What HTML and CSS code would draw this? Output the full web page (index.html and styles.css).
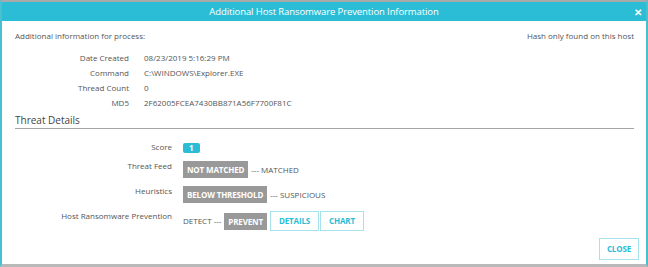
FILE: index.html
```html
<!DOCTYPE html>
<html lang="en">
<head>
    <meta charset="UTF-8">
    <title>Additional Host Ransomware Prevention Information</title>
    <link rel="stylesheet" href="styles.css">
</head>
<body>
    <div class="dialog">
        <div class="header">
            <span class="title">Additional Host Ransomware Prevention Information</span>
            <span class="close-x">&#10005;</span>
        </div>
        <div class="content">
            <div class="intro">
                <span>Additional information for process:</span>
                <span>Hash only found on this host</span>
            </div>
            <div class="info">
                <div class="lbl">Date Created</div><div>08/23/2019 5:16:29 PM</div>
                <div class="lbl">Command</div><div>C:\WINDOWS\Explorer.EXE</div>
                <div class="lbl">Thread Count</div><div>0</div>
                <div class="lbl">MD5</div><div>2F62005FCEA7430BB871A56F7700F81C</div>
            </div>
            <div class="section-title">Threat Details</div>
            <div class="threat">
                <div class="lbl">Score</div>
                <div class="val"><span class="score">1</span></div>
                <div class="lbl">Threat Feed</div>
                <div class="val"><span class="tag">NOT MATCHED</span><span>--- MATCHED</span></div>
                <div class="lbl">Heuristics</div>
                <div class="val"><span class="tag">BELOW THRESHOLD</span><span>--- SUSPICIOUS</span></div>
                <div class="lbl">Host Ransomware Prevention</div>
                <div class="val">
                    <span>DETECT ---</span>
                    <span class="tag">PREVENT</span>
                    <span class="btn-group"><span class="btn">DETAILS</span><span class="btn">CHART</span></span>
                </div>
            </div>
        </div>
        <div class="footer">
            <span class="btn close-btn">CLOSE</span>
        </div>
    </div>
</body>
</html>
```

FILE: styles.css
```css
html, body { margin: 0; padding: 0; background: #fff; }
body { font-family: "Open Sans", sans-serif; color: #555; font-size: 8px; }
.dialog { width: 648px; height: 267px; box-sizing: border-box; border-top: 2px solid #a9a9a9; border-left: 2px solid #4bbfd0; border-right: 2px solid #4bbfd0; border-bottom: 3px solid #b9b9b9; display: flex; flex-direction: column; }
.header { height: 19px; background: #2bbdd6; color: #fff; display: flex; align-items: center; justify-content: center; position: relative; }
.title { font-size: 9.5px; letter-spacing: -0.1px; }
.close-x { position: absolute; right: 4px; top: 3px; font-size: 10px; font-weight: bold; }
.content { padding: 0 12px 0 13px; flex: 1; }
.intro { display: flex; justify-content: space-between; margin-top: 9px; line-height: 12px; }
.info { display: grid; grid-template-columns: 114px auto; column-gap: 15px; margin-top: 8px; line-height: 15px; }
.lbl { text-align: right; }
.section-title { font-size: 10px; color: #444; margin-top: 4px; padding-bottom: 1px; border-bottom: 1px solid #a5a5a5; line-height: 13px; }
.threat { display: grid; grid-template-columns: 157px auto; column-gap: 11px; row-gap: 8px; margin-top: 13px; line-height: 12px; }
.threat .lbl { line-height: 12px; margin-top: -1px; }
.val { display: flex; align-items: center; gap: 3px; }
.score { background: #2bbdd6; color: #fff; border-radius: 2px; padding: 0 6px; font-weight: bold; line-height: 10px; }
.tag { background: #999; color: #fff; font-weight: bold; padding: 3px 4px 2px; line-height: 12px; letter-spacing: -0.15px; }
.btn-group { display: flex; gap: 1px; }
.btn { border: 1px solid #a6e2ec; color: #2bbdd6; font-weight: bold; padding: 3px 8px; line-height: 12px; letter-spacing: -0.15px; }
.footer { display: flex; justify-content: flex-end; padding: 0 7px 4px 0; }
.close-btn { padding: 4px 7px; }
```
